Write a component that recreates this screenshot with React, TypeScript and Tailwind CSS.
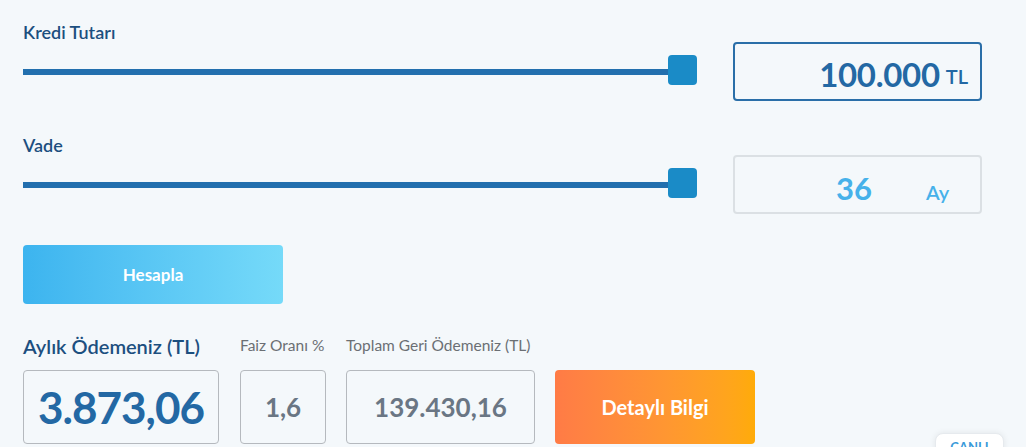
import React from "react";

function Slider() {
  return (
    <div className="relative mt-[13px] h-[30px] w-[674px]">
      <div className="absolute left-0 right-[12px] top-[14px] h-[6px] bg-[#226fae]" />
      <div className="absolute right-0 top-0 h-[30px] w-[29px] rounded-[4px] bg-[#1a8bc7]" />
    </div>
  );
}

export default function App() {
  return (
    <div
      className="relative h-[447px] w-[1026px] overflow-hidden bg-[#f4f8fb] pl-[23px] pt-[22px]"
      style={{ fontFamily: "Lato, 'Noto Sans', sans-serif" }}
    >
      {/* Row 1 */}
      <div className="flex items-start">
        <div className="flex w-[674px] flex-col">
          <div className="h-[20px] text-[18px] font-semibold leading-[20px] text-[#1c4f7f]">Kredi Tutarı</div>
          <Slider />
        </div>
        <div className="ml-[36px] mt-[20px] flex h-[59px] w-[249px] items-baseline justify-end rounded-[4px] border-2 border-[#2a6ea8] pr-[12px] pt-[6px]">
          <span className="text-[33px] font-bold tracking-[-0.3px] text-[#2368a4]">100.000</span>
          <span className="relative -top-[3px] ml-[6px] text-[20px] font-semibold text-[#2368a4]">TL</span>
        </div>
      </div>

      {/* Row 2 */}
      <div className="mt-[34px] flex items-start">
        <div className="flex w-[674px] flex-col">
          <div className="h-[20px] text-[18px] font-semibold leading-[20px] text-[#1c4f7f]">Vade</div>
          <Slider />
        </div>
        <div className="ml-[36px] mt-[20px] flex h-[59px] w-[249px] items-baseline rounded-[4px] border-2 border-[#dbe0e4] pl-[101px] pt-[8px]">
          <span className="text-[31px] font-bold text-[#46b1ea]">36</span>
          <span className="ml-[54px] text-[20px] font-semibold text-[#46b1ea]">Ay</span>
        </div>
      </div>

      {/* Hesapla */}
      <button className="mt-[31px] flex h-[59px] w-[260px] items-center justify-center rounded-[4px] bg-gradient-to-r from-[#3cb4ef] to-[#75daf9] text-[17px] font-bold text-white">
        Hesapla
      </button>

      {/* Results */}
      <div className="mt-[30px] flex items-start">
        <div className="flex w-[196px] flex-col">
          <div className="flex h-[24px] items-center whitespace-nowrap text-[20px] font-semibold text-[#1c4f7f]">Aylık Ödemeniz (TL)</div>
          <div className="mt-[12px] flex h-[74px] items-center justify-center rounded-[4px] border border-[#b5b9be]">
            <span className="text-[44px] font-bold tracking-[-1px] text-[#2368a4]">3.873,06</span>
          </div>
        </div>
        <div className="ml-[21px] flex w-[86px] flex-col">
          <div className="flex h-[24px] items-center whitespace-nowrap text-[15.5px] text-[#6b6f74]">Faiz Oranı %</div>
          <div className="mt-[12px] flex h-[74px] items-center justify-center rounded-[4px] border border-[#b5b9be]">
            <span className="text-[26px] font-bold text-[#6a7684]">1,6</span>
          </div>
        </div>
        <div className="ml-[20px] flex w-[189px] flex-col">
          <div className="flex h-[24px] items-center whitespace-nowrap text-[15.5px] text-[#6b6f74]">Toplam Geri Ödemeniz (TL)</div>
          <div className="mt-[12px] flex h-[74px] items-center justify-center rounded-[4px] border border-[#b5b9be]">
            <span className="text-[26px] font-bold text-[#6a7684]">139.430,16</span>
          </div>
        </div>
        <div className="ml-[20px] flex w-[200px] flex-col">
          <div className="h-[24px]" />
          <button className="mt-[12px] flex h-[74px] items-center justify-center rounded-[4px] bg-gradient-to-r from-[#ff7b46] to-[#ffab08] text-[20px] font-bold text-white">
            Detaylı Bilgi
          </button>
        </div>
      </div>

      {/* CANLI badge */}
      <div className="absolute left-[935px] top-[433px] flex h-[30px] w-[69px] justify-center rounded-[8px] border border-[#e6eaee] bg-white pt-[4px] text-[13px] font-bold text-[#3a9ad9] shadow-[0_0_6px_rgba(0,0,0,0.08)]">
        CANLI
      </div>
    </div>
  );
}
